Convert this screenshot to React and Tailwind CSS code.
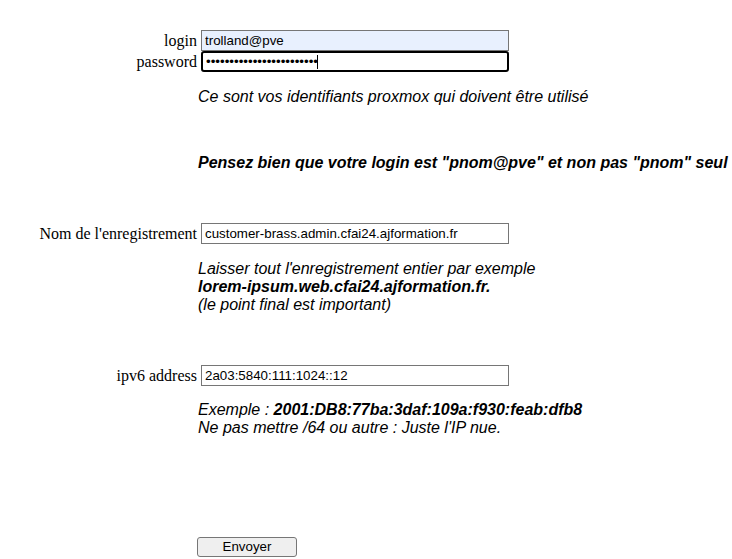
import React from 'react';

const serif = { fontFamily: '"Liberation Serif", "Times New Roman", serif' };

// Ligne du formulaire : libellé à droite + champ
const Row = ({ label, children, className = '' }) => (
  <div className={`flex h-[21px] items-center ${className}`}>
    <label className="w-[201px] shrink-0 pr-[4px] text-right text-[16px] leading-[21px] text-black font-['Liberation_Serif',serif]">
      {label}
    </label>
    {children}
  </div>
);

const inputBase =
  "block h-[21px] w-[308px] px-[3px] text-[13.33px] leading-[15px] text-black font-['Liberation_Sans',Arial,sans-serif] outline-none";

// Texte d'aide en italique sous un champ
const Hint = ({ children, className = '' }) => (
  <div className={`ml-[198px] italic text-[16px] leading-[18px] text-black font-['Liberation_Sans',Arial,sans-serif] ${className}`}>
    {children}
  </div>
);

export default function App() {
  return (
    <div className="w-[732px] h-[559px] bg-white overflow-hidden" style={serif}>
      <form className="flex flex-col pt-[30px]" onSubmit={(e) => e.preventDefault()}>
        <Row label="login">
          <input
            type="text"
            defaultValue="trolland@pve"
            className={`${inputBase} border border-[#767676] bg-[#e8f0fe]`}
          />
        </Row>
        <Row label="password">
          <div className="relative">
            <input
              type="password"
              defaultValue="xxxxxxxxxxxxxxxxxxxxxxxx"
              className={`${inputBase} border-2 border-black rounded-[3px] bg-white px-[2px]`}
            />
            <span className="absolute left-[116px] top-[4px] h-[14px] w-px bg-black" />
          </div>
        </Row>

        <Hint className="mt-[16px]">Ce sont vos identifiants proxmox qui doivent être utilisé</Hint>

        <Hint className="mt-[48px] font-bold whitespace-nowrap">
          Pensez bien que votre login est "pnom@pve" et non pas "pnom" seul
        </Hint>

        <Row label="Nom de l'enregistrement" className="mt-[51px]">
          <input
            type="text"
            defaultValue="customer-brass.admin.cfai24.ajformation.fr"
            className={`${inputBase} border border-[#767676] bg-white`}
          />
        </Row>

        <Hint className="mt-[16px]">
          Laisser tout l'enregistrement entier par exemple
          <br />
          <b>lorem-ipsum.web.cfai24.ajformation.fr.</b>
          <br />
          (le point final est important)
        </Hint>

        <Row label="ipv6 address" className="mt-[51px]">
          <input
            type="text"
            defaultValue="2a03:5840:111:1024::12"
            className={`${inputBase} border border-[#767676] bg-white`}
          />
        </Row>

        <Hint className="mt-[15px]">
          Exemple : <b>2001:DB8:77ba:3daf:109a:f930:feab:dfb8</b>
          <br />
          Ne pas mettre /64 ou autre : Juste l'IP nue.
        </Hint>

        <div className="ml-[197px] mt-[100px]">
          <button
            type="submit"
            className="block h-[20px] w-[100px] rounded-[3px] border border-[#767676] bg-[#efefef] text-[13.33px] leading-[16px] text-black font-['Liberation_Sans',Arial,sans-serif]"
          >
            Envoyer
          </button>
        </div>
      </form>
    </div>
  );
}
